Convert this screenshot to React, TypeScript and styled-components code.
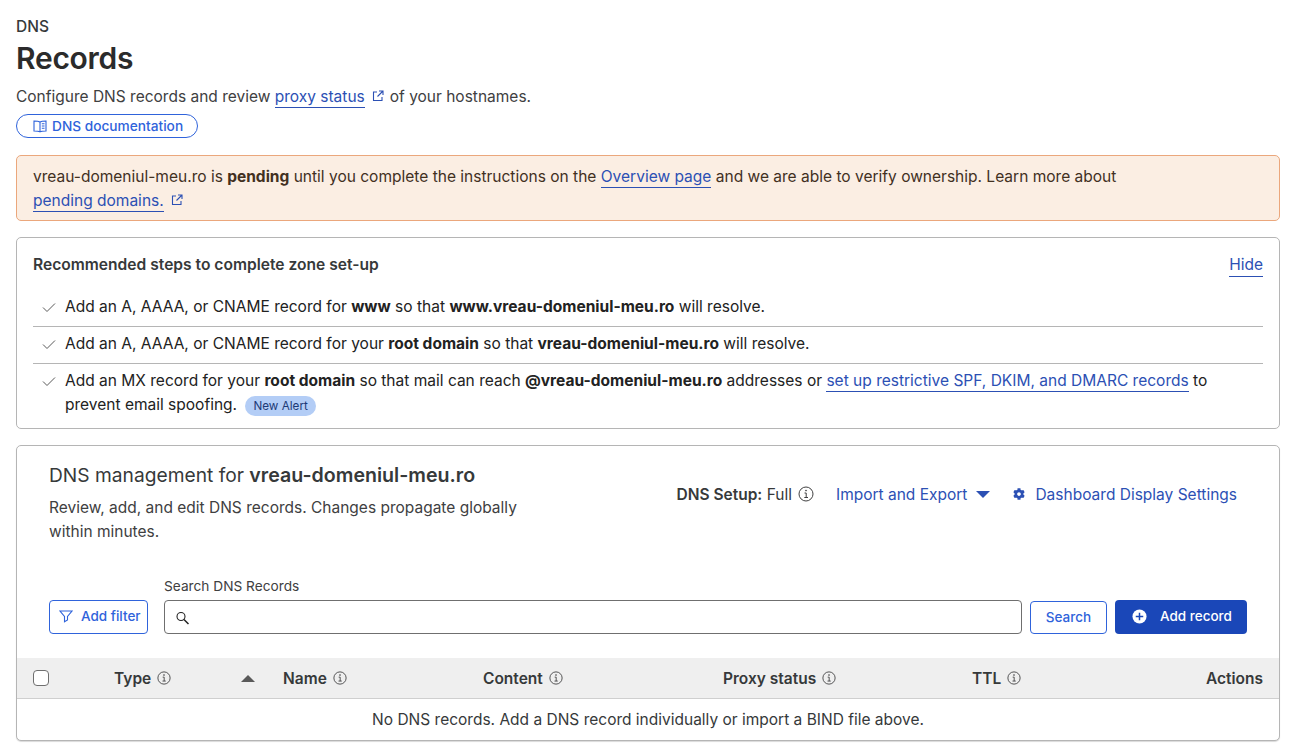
import React from 'react';
import styled, { createGlobalStyle } from 'styled-components';
import { FaCog } from 'react-icons/fa';

const GlobalStyle = createGlobalStyle`
  * { box-sizing: border-box; }
  html, body { margin: 0; padding: 0; background: #fff; }
  body {
    font-family: Inter, "Liberation Sans", sans-serif;
    color: #36393a;
    height: 744px;
    overflow: hidden;
  }
`;

const Page = styled.div`
  padding: 18px 20px 0 16px;
`;

const Crumb = styled.div`
  font-size: 15.5px;
  line-height: 18px;
  font-weight: 500;
  color: #36393a;
`;

const Title = styled.h1`
  margin: 4px 0 0;
  font-size: 30px;
  line-height: 36px;
  font-weight: 600;
  letter-spacing: -0.27px;
  color: #2b2b2b;
`;

const Intro = styled.p`
  margin: 9px 0 0;
  font-size: 15.5px;
  line-height: 24px;
  color: #404041;
`;

const TextLink = styled.a`
  color: #2c50b4;
  text-decoration: none;
  border-bottom: 1px solid #2c50b4;
  padding-bottom: 1px;
`;

const ExternalIcon = styled.svg`
  width: 14px;
  height: 14px;
  margin: 0 5px 0 6px;
  vertical-align: -1px;
  fill: none;
  stroke: #2c50b4;
  stroke-width: 1.1;
`;

const DocsPill = styled.a`
  display: flex;
  align-items: center;
  gap: 5px;
  height: 24px;
  width: 182px;
  margin-top: 5px;
  padding-left: 16px;
  border: 1px solid #2f63db;
  border-radius: 12px;
  color: #2f63db;
  font-size: 13.7px;
  font-weight: 500;
`;

const Banner = styled.div`
  margin-top: 17px;
  height: 66px;
  padding: 9px 16px;
  background: #fbeee3;
  border: 1px solid #eba77c;
  border-radius: 5px;
  font-size: 15.53px;
  line-height: 24px;
  color: #42301f;
`;

const Card = styled.section`
  margin-top: 16px;
  border: 1px solid #b5b5b5;
  border-radius: 5px;
  background: #fff;
`;

const StepsCard = styled(Card)`
  height: 192px;
  padding: 14px 16px 0;
`;

const StepsHead = styled.div`
  display: flex;
  justify-content: space-between;
  align-items: center;
  height: 24px;
`;

const StepsTitle = styled.div`
  font-size: 15.6px;
  font-weight: 600;
  color: #36393a;
`;

const HideLink = styled(TextLink)`
  margin-top: 4px;
  font-size: 15.5px;
  line-height: 20px;
`;

const StepList = styled.ul`
  list-style: none;
  margin: 14px 0 0;
  padding: 0;
`;

const Step = styled.li`
  display: flex;
  padding: 5px 0 7px 9px;
  font-size: 15.53px;
  line-height: 24px;
  color: #222;
  & + & {
    border-top: 1px solid #b5b5b5;
  }
`;

const CheckIcon = styled.svg`
  flex: none;
  width: 14px;
  height: 14px;
  margin: 5px 9px 0 0;
  fill: none;
  stroke: #595959;
  stroke-width: 1;
`;

const AlertTag = styled.span`
  display: inline-block;
  margin-left: 4px;
  padding: 0 8px;
  height: 20px;
  line-height: 20px;
  border-radius: 10px;
  background: #b3cdf6;
  color: #1d3a77;
  font-size: 11.7px;
  vertical-align: 0;
`;

const ManageCard = styled(Card)`
  height: 296px;
  box-shadow: 0 1px 1px rgba(0, 0, 0, 0.15);
  overflow: hidden;
`;

const ManageTop = styled.div`
  display: flex;
  justify-content: space-between;
  height: 139px;
  padding: 15px 42px 0 32px;
`;

const ManageIntro = styled.div`
  width: 500px;
`;

const ManageTitle = styled.h2`
  margin: 0;
  font-size: 19.2px;
  line-height: 28px;
  font-weight: 400;
  color: #36393a;
  b {
    font-size: 19.6px;
    font-weight: 600;
  }
`;

const ManageText = styled.p`
  margin: 7px 0 0;
  font-size: 15.5px;
  line-height: 24px;
  color: #404041;
`;

const ManageActions = styled.div`
  display: flex;
  align-items: center;
  height: 24px;
  margin-top: 21px;
  font-size: 15.5px;
`;

const SetupLabel = styled.span`
  color: #36393a;
  b {
    font-weight: 600;
  }
`;

const InfoIcon = styled.svg<{ $size?: number }>`
  flex: none;
  width: ${p => p.$size ?? 14}px;
  height: ${p => p.$size ?? 14}px;
  fill: none;
  stroke: #404041;
  stroke-width: 1;
  margin-left: 6px;
`;

const ActionLink = styled.a`
  display: inline-flex;
  align-items: center;
  color: #2c50b4;
`;

const ImportLink = styled(ActionLink)`
  margin-left: 22px;
`;

const SettingsLink = styled(ActionLink)`
  margin-left: 23px;
  gap: 10px;
`;

const Caret = styled.span`
  width: 0;
  height: 0;
  margin-left: 9px;
  border-left: 7px solid transparent;
  border-right: 7px solid transparent;
  border-top: 7px solid #2c50b4;
`;

const SearchRow = styled.div`
  display: flex;
  align-items: flex-end;
  height: 49px;
  padding-left: 32px;
`;

const FilterButton = styled.button`
  display: flex;
  align-items: center;
  gap: 8px;
  width: 99px;
  height: 34px;
  padding: 0 0 2px 9px;
  background: #fff;
  border: 1px solid #2f63db;
  border-radius: 4px;
  color: #2f63db;
  font: 500 13.5px Inter, sans-serif;
`;

const SearchField = styled.div`
  margin-left: 16px;
  width: 858px;
`;

const SearchLabel = styled.label`
  display: block;
  height: 21px;
  font-size: 13.7px;
  line-height: 14px;
  color: #404041;
`;

const SearchBox = styled.div`
  display: flex;
  align-items: center;
  height: 34px;
  padding-left: 10px;
  border: 1px solid #6f6f6f;
  border-radius: 4px;
`;

const SearchInput = styled.input`
  flex: 1;
  min-width: 0;
  border: 0;
  outline: 0;
  background: transparent;
`;

const SearchButton = styled.button`
  width: 77px;
  height: 33px;
  margin-left: 8px;
  padding: 0 0 2px;
  background: #fff;
  border: 1px solid #2f63db;
  border-radius: 4px;
  color: #2f63db;
  font: 500 13.5px Inter, sans-serif;
`;

const AddButton = styled.button`
  display: flex;
  align-items: center;
  gap: 13px;
  width: 132px;
  height: 34px;
  margin-left: 8px;
  padding: 0 0 2px 17px;
  background: #1a47b8;
  border: 0;
  border-radius: 4px;
  color: #fff;
  font: 500 13.5px Inter, sans-serif;
`;

const HeadRow = styled.div`
  display: grid;
  grid-template-columns: 97px 169px 200px 240px 249px 1fr auto;
  align-items: center;
  height: 41px;
  margin-top: 24px;
  padding-right: 16px;
  background: #efefef;
  border-bottom: 1px solid #cfcfcf;
  font-size: 15.5px;
  font-weight: 600;
  color: #36393a;
`;

const CheckCell = styled.div`
  display: flex;
  padding-left: 16px;
`;

const Checkbox = styled.span`
  display: block;
  width: 16px;
  height: 16px;
  background: #fff;
  border: 1px solid #6f6f6f;
  border-radius: 4px;
`;

const HeadCell = styled.div`
  display: flex;
  align-items: center;
  position: relative;
`;

const SortArrow = styled.span`
  position: absolute;
  left: 127px;
  width: 0;
  height: 0;
  border-left: 7px solid transparent;
  border-right: 7px solid transparent;
  border-bottom: 7px solid #595959;
`;

const EmptyRow = styled.div`
  height: 41px;
  line-height: 41px;
  text-align: center;
  font-size: 15.5px;
  color: #36393a;
`;

const External = () => (
  <ExternalIcon viewBox="0 0 14 14">
    <path d="M6 3H2.5v8.5H11V8M8 2h4v4M12 2L6.5 7.5" />
  </ExternalIcon>
);

const Check = () => (
  <CheckIcon viewBox="0 0 14 14">
    <path d="M1 7.5L5 11.5L13 3.5" />
  </CheckIcon>
);

const Info = ({ size }: { size?: number }) => (
  <InfoIcon $size={size} viewBox="0 0 16 16">
    <circle cx="8" cy="8" r="7" />
    <path d="M6.5 7H8.2V11.5M6.3 11.5H10" />
    <circle cx="8" cy="4.6" r="0.5" />
  </InfoIcon>
);

const columns = [
  { label: 'Type', sort: true },
  { label: 'Name' },
  { label: 'Content' },
  { label: 'Proxy status' },
  { label: 'TTL' },
];

export default function App() {
  return (
    <Page>
      <GlobalStyle />
      <Crumb>DNS</Crumb>
      <Title>Records</Title>
      <Intro>
        Configure DNS records and review <TextLink>proxy status</TextLink>
        <External />
        of your hostnames.
      </Intro>
      <DocsPill>
        <svg width="14" height="14" viewBox="0 0 14 14" fill="none" stroke="#2f63db" strokeWidth="1.1">
          <path d="M7 3C5.5 2 3.5 2 1 2V12C3.5 12 5.5 12 7 12.8C8.5 12 10.5 12 13 12V2C10.5 2 8.5 2 7 3V12.8" />
          <path d="M8.8 4.8H11.5M8.8 7H11.5M8.8 9.2H11.5" />
        </svg>
        DNS documentation
      </DocsPill>

      <Banner>
        vreau-domeniul-meu.ro is <b>pending</b> until you complete the instructions on the{' '}
        <TextLink>Overview page</TextLink> and we are able to verify ownership. Learn more about
        <br />
        <TextLink>pending domains.</TextLink>
        <External />
      </Banner>

      <StepsCard>
        <StepsHead>
          <StepsTitle>Recommended steps to complete zone set-up</StepsTitle>
          <HideLink>Hide</HideLink>
        </StepsHead>
        <StepList>
          <Step>
            <Check />
            <span>
              Add an A, AAAA, or CNAME record for <b>www</b> so that <b>www.vreau-domeniul-meu.ro</b> will resolve.
            </span>
          </Step>
          <Step>
            <Check />
            <span>
              Add an A, AAAA, or CNAME record for your <b>root domain</b> so that <b>vreau-domeniul-meu.ro</b> will resolve.
            </span>
          </Step>
          <Step>
            <Check />
            <span>
              Add an MX record for your <b>root domain</b> so that mail can reach <b>@vreau-domeniul-meu.ro</b> addresses or{' '}
              <TextLink>set up restrictive SPF, DKIM, and DMARC records</TextLink> to
              <br />
              prevent email spoofing. <AlertTag>New Alert</AlertTag>
            </span>
          </Step>
        </StepList>
      </StepsCard>

      <ManageCard>
        <ManageTop>
          <ManageIntro>
            <ManageTitle>
              DNS management for <b>vreau-domeniul-meu.ro</b>
            </ManageTitle>
            <ManageText>
              Review, add, and edit DNS records. Changes propagate globally
              <br />
              within minutes.
            </ManageText>
          </ManageIntro>
          <ManageActions>
            <SetupLabel>
              <b>DNS Setup:</b> Full
            </SetupLabel>
            <Info size={16} />
            <ImportLink>
              Import and Export
              <Caret />
            </ImportLink>
            <SettingsLink>
              <FaCog size={12} color="#2c50b4" />
              Dashboard Display Settings
            </SettingsLink>
          </ManageActions>
        </ManageTop>

        <SearchRow>
          <FilterButton>
            <svg width="14" height="14" viewBox="0 0 14 14" fill="none" stroke="#2f63db" strokeWidth="1.1">
              <path d="M1 2H13L8.5 7.5V11L5.5 12.8V7.5L1 2Z" />
            </svg>
            Add filter
          </FilterButton>
          <SearchField>
            <SearchLabel>Search DNS Records</SearchLabel>
            <SearchBox>
              <svg width="15" height="15" viewBox="0 0 15 15" fill="none" stroke="#222" strokeWidth="1.1">
                <circle cx="6" cy="6.5" r="4" />
                <path d="M9 9.5L13.5 14" strokeWidth="1.5" />
              </svg>
              <SearchInput />
            </SearchBox>
          </SearchField>
          <SearchButton>Search</SearchButton>
          <AddButton>
            <svg width="15" height="15" viewBox="0 0 16 16">
              <circle cx="8" cy="8" r="7.5" fill="#fff" />
              <path d="M8 4V12M4 8H12" stroke="#1a47b8" strokeWidth="1.6" />
            </svg>
            Add record
          </AddButton>
        </SearchRow>

        <HeadRow>
          <CheckCell>
            <Checkbox />
          </CheckCell>
          {columns.map(col => (
            <HeadCell key={col.label}>
              {col.label}
              <Info />
              {col.sort && <SortArrow />}
            </HeadCell>
          ))}
          <HeadCell>Actions</HeadCell>
        </HeadRow>
        <EmptyRow>No DNS records. Add a DNS record individually or import a BIND file above.</EmptyRow>
      </ManageCard>
    </Page>
  );
}
